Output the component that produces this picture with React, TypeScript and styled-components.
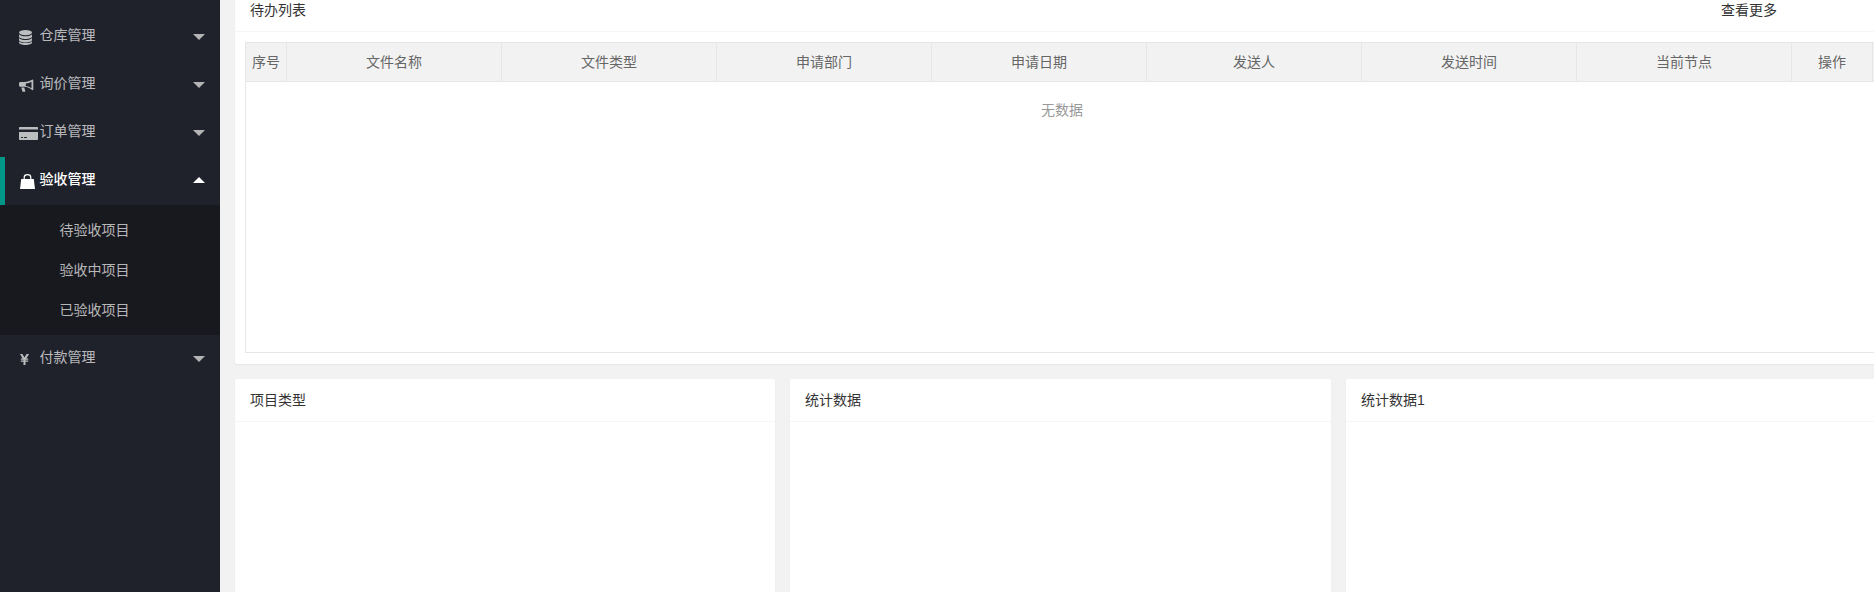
import React from 'react';
import styled, { createGlobalStyle } from 'styled-components';

const GlobalStyle = createGlobalStyle`
	html,
	body {
		margin: 0;
		padding: 0;
		height: 100%;
		overflow: hidden;
		background: #f2f2f2;
	}
	* {
		box-sizing: border-box;
	}
`;

const DatabaseIcon = () => (
	<svg width='13' height='15' viewBox='0 0 13 15' fill='currentColor'>
		<ellipse cx='6.5' cy='2.6' rx='6.5' ry='2.6' />
		<path d='M0 4.3c1 1.4 3.6 2 6.5 2s5.500-.6 6.500-2v2.100c0 1.400-2.900 2.500-6.500 2.500S0 7.800 0 6.400z' />
		<path d='M0 8c1 1.400 3.600 2 6.500 2s5.500-.6 6.500-2v2.100c0 1.400-2.900 2.500-6.500 2.500S0 11.500 0 10.100z' />
		<path d='M0 11.200c1 1.400 3.600 1.900 6.500 1.900s5.500-.5 6.500-1.900v1.300c0 1.400-2.900 2.500-6.500 2.500S0 13.900 0 12.500z' />
	</svg>
);

const BullhornIcon = () => (
	<svg width='15' height='13' viewBox='0 0 15 13' fill='currentColor'>
		<path d='M13.500 0.500c.5 0 .8.400.8.900v8.900c0 .5-.3.900-.8.900-2.600-2.200-5.200-3.300-8-3.500H1.500C.7 7.700 0 7 0 6.200V4.600c0-.8.700-1.500 1.500-1.500h4c2.800-.2 5.400-1.100 8-2.600zm-1 2.200c-1.800 1-3.700 1.600-5.700 1.900v2.500c2 .3 3.900 1 5.700 2.100z' />
		<path d='M2.300 8.600h3l1 3.700c.1.300-.1.500-.4.500H4c-.3 0-.5-.2-.6-.4z' />
	</svg>
);

const CardIcon = () => (
	<svg width='19' height='13' viewBox='0 0 19 13' fill='currentColor'>
		<path d='M1 0h17c.6 0 1 .4 1 1v1.500H0V1c0-.6.4-1 1-1z' />
		<path d='M0 5h19v7c0 .6-.4 1-1 1H1c-.6 0-1-.4-1-1zm2 5v1h2v-1zm3 0v1h3v-1z' fillRule='evenodd' />
	</svg>
);

const BagIcon = () => (
	<svg width='16' height='15' viewBox='-1 0 16 15' fill='currentColor'>
		<path d='M1.200 5H13.800L15 15H0z' />
		<path d='M4.200 6V3.400C4.200 1.700 5.600.7 7.500.7s3.300 1 3.300 2.700V6' fill='none' stroke='currentColor' strokeWidth='1.200' />
	</svg>
);

const YenIcon = () => (
	<svg width='10' height='11' viewBox='-1 0 10 11' fill='currentColor'>
		<path d='M0 0h2.400l2.100 3.600L6.600 0H9L6.400 4.500h1.800v1.200H5.500v.9h2.700v1.200H5.500V11H3.500V7.800H.8V6.600h2.700v-.9H.8V4.500h1.800z' />
	</svg>
);

const menu = [
	{ label: '仓库管理', icon: <DatabaseIcon /> },
	{ label: '询价管理', icon: <BullhornIcon /> },
	{ label: '订单管理', icon: <CardIcon /> },
	{ label: '验收管理', icon: <BagIcon />, open: true, children: ['待验收项目', '验收中项目', '已验收项目'] },
	{ label: '付款管理', icon: <YenIcon /> },
];

const columns = [
	{ title: '序号', width: 41 },
	{ title: '文件名称', width: 215 },
	{ title: '文件类型', width: 215 },
	{ title: '申请部门', width: 215 },
	{ title: '申请日期', width: 215 },
	{ title: '发送人', width: 215 },
	{ title: '发送时间', width: 215 },
	{ title: '当前节点', width: 215 },
	{ title: '操作', width: 81 },
];

const App = () => {
	return (
		<Layout>
			<GlobalStyle />
			<Sidebar>
				{menu.map((item) => (
					<div key={item.label}>
						<NavItem $open={!!item.open}>
							<NavIcon>{item.icon}</NavIcon>
							<span>{item.label}</span>
							<Arrow $open={!!item.open} />
						</NavItem>
						{item.children && (
							<SubMenu>
								{item.children.map((child) => (
									<SubItem key={child}>{child}</SubItem>
								))}
							</SubMenu>
						)}
					</div>
				))}
			</Sidebar>
			<Main>
				<TodoCard>
					<CardHeader>
						<span>待办列表</span>
						<MoreLink>查看更多</MoreLink>
					</CardHeader>
					<TableWrap>
						<HeadRow>
							{columns.map((col) => (
								<HeadCell key={col.title} style={{ width: col.width }}>
									{col.title}
								</HeadCell>
							))}
						</HeadRow>
						<EmptyText>无数据</EmptyText>
					</TableWrap>
				</TodoCard>
				<ChartRow>
					<ChartCard>
						<CardHeader>项目类型</CardHeader>
					</ChartCard>
					<ChartCard>
						<CardHeader>统计数据</CardHeader>
					</ChartCard>
					<ChartCard>
						<CardHeader>统计数据1</CardHeader>
					</ChartCard>
				</ChartRow>
			</Main>
		</Layout>
	);
};

const Layout = styled.div`
	display: flex;
	width: 1874px;
	height: 592px;
	overflow: hidden;
	font-family: 'Liberation Sans', 'Noto Sans CJK SC', sans-serif;
	font-size: 14px;
	color: #333;
`;

const Sidebar = styled.aside`
	flex: 0 0 220px;
	padding-top: 13px;
	background: #1f222b;
`;

const NavItem = styled.div<{ $open: boolean }>`
	position: relative;
	display: flex;
	align-items: center;
	height: 48px;
	padding-left: ${(p) => (p.$open ? '14px' : '19px')};
	font-weight: ${(p) => (p.$open ? 500 : 400)};
	color: ${(p) => (p.$open ? '#fff' : 'rgba(255, 255, 255, 0.7)')};
	border-left: ${(p) => (p.$open ? '5px solid #009688' : 'none')};

	span {
		line-height: 48px;
		margin-top: -4px;
	}
`;

const NavIcon = styled.i`
	display: flex;
	align-items: center;
	width: 20.5px;
	height: 48px;
`;

const Arrow = styled.b<{ $open: boolean }>`
	position: absolute;
	right: 15px;
	top: ${(p) => (p.$open ? '20px' : '21px')};
	width: 0;
	height: 0;
	border-left: 6px solid transparent;
	border-right: 6px solid transparent;
	border-top: ${(p) => (p.$open ? 'none' : '6px solid #b4b4b4')};
	border-bottom: ${(p) => (p.$open ? '6px solid #fff' : 'none')};
`;

const SubMenu = styled.div`
	padding: 5px 0;
	border-radius: 2px;
	background: #18191e;
`;

const SubItem = styled.div`
	height: 40px;
	padding-left: 59.5px;
	line-height: 40px;
	color: rgba(255, 255, 255, 0.7);
`;

const Main = styled.main`
	flex: 1;
	min-width: 0;
	margin-top: -11px;
	padding-left: 15px;
	overflow: hidden;
`;

const Card = styled.section`
	border-radius: 2px;
	background: #fff;
	box-shadow: 0 1px 2px 0 rgba(0, 0, 0, 0.05);
`;

const TodoCard = styled(Card)`
	width: 1660px;
	height: 375px;
`;

const ChartCard = styled(Card)`
	height: 300px;
`;

const CardHeader = styled.header`
	display: flex;
	height: 43px;
	padding: 0 15px;
	line-height: 42px;
	border-bottom: 1px solid #f6f6f6;
`;

const MoreLink = styled.a`
	margin-left: auto;
	margin-right: 103px;
`;

const TableWrap = styled.div`
	width: 1640px;
	height: 311px;
	margin: 10px 0 0 10px;
	border: 1px solid #e6e6e6;
`;

const HeadRow = styled.div`
	display: flex;
	height: 39px;
	background: #f2f2f2;
	border-bottom: 1px solid #e6e6e6;
`;

const HeadCell = styled.div`
	flex: none;
	line-height: 38px;
	text-align: center;
	color: #666;
	border-right: 1px solid #e6e6e6;
`;

const EmptyText = styled.div`
	width: 1632px;
	padding-top: 18px;
	line-height: 20px;
	text-align: center;
	color: #999;
`;

const ChartRow = styled.div`
	display: grid;
	grid-template-columns: 540px 541px 540px;
	gap: 15px;
	margin-top: 15px;
`;

export default App;
